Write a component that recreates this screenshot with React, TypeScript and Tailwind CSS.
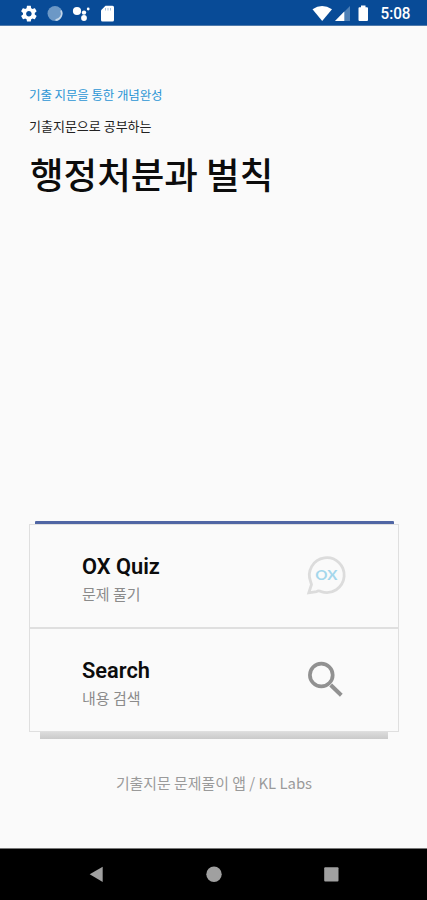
import type { ReactNode } from "react";

const StatusBar = () => (
  <div className="h-[26px] shrink-0 bg-[#084b97] border-b border-[#4f7aab] text-white">
    <svg width="427" height="25" viewBox="0 0 427 25" fill="currentColor">
      {/* settings */}
      <g transform="translate(19.4 4.2) scale(0.79)">
        <path d="M19.43 12.98c.04-.32.07-.64.07-.98s-.03-.66-.07-.98l2.11-1.65c.19-.15.24-.42.12-.64l-2-3.46c-.12-.22-.39-.3-.61-.22l-2.49 1c-.52-.4-1.08-.73-1.69-.98l-.38-2.65C14.46 2.18 14.25 2 14 2h-4c-.25 0-.46.18-.49.42l-.38 2.65c-.61.25-1.17.59-1.69.98l-2.49-1c-.23-.09-.49 0-.61.22l-2 3.46c-.13.22-.07.49.12.64l2.11 1.65c-.04.32-.07.65-.07.98s.03.66.07.98l-2.11 1.65c-.19.15-.24.42-.12.64l2 3.46c.12.22.39.3.61.22l2.49-1c.52.4 1.08.73 1.69.98l.38 2.65c.03.24.24.42.49.42h4c.25 0 .46-.18.49-.42l.38-2.65c.61-.25 1.17-.59 1.69-.98l2.49 1c.23.09.49 0 .61-.22l2-3.46c.12-.22.07-.49-.12-.64l-2.11-1.65zM12 15.5c-1.93 0-3.5-1.57-3.5-3.5s1.57-3.5 3.500-3.500 3.500 1.570 3.500 3.500-1.570 3.500-3.500 3.500z" />
      </g>
      {/* sync spinner */}
      <circle cx="55" cy="13.5" r="7.5" fill="#6c98c6" />
      <path d="M61 10.5A6.7 6.7 0 0 1 55.5 20.1" fill="none" stroke="#c3d6e9" strokeWidth="1.6" />
      {/* assistant */}
      <circle cx="77" cy="11" r="4.1" />
      <circle cx="84" cy="12.6" r="2.2" />
      <circle cx="88.2" cy="9" r="1.4" />
      <circle cx="84" cy="18" r="2.9" />
      {/* sd card */}
      <path d="M105.5 5.7H112.5Q114 5.7 114 7.2V20Q114 21.5 112.5 21.5H102.5Q101 21.5 101 20V10.2Z" />
      <path d="M105.5 8v2.5M108 8v2.5M110.5 8v2.5" stroke="#9dbbd9" strokeWidth="0.9" />
      {/* wifi, signal, battery */}
      <path d="M312.5 9.2Q322 3 332 9.2L322.2 21Z" />
      <path d="M350 6V21H335Z" fill="#4d7fb5" />
      <path d="M344.3 11.5V21H335Z" />
      <path d="M361 5.5h4.5v1.8h1.5q1 0 1 1V20q0 1-1 1h-7.5q-1 0-1-1V8.3q0-1 1-1H361Z" />
      <text x="380.5" y="19.3" fontSize="16" fontWeight="500" fontFamily="Roboto, sans-serif" textLength="30" lengthAdjust="spacingAndGlyphs">
        5:08
      </text>
    </svg>
  </div>
);

const QuizIcon = () => (
  <svg width="44" height="44" viewBox="0 0 44 44" fill="none">
    <path
      d="M6.6 27.5A17.4 17.4 0 1 1 17.2 37.6Q14.5 36.2 12.5 37.6L4.8 38.8L7.5 30.5Z"
      stroke="#dcdcdc"
      strokeWidth="2.8"
    />
    <text x="11.3" y="26" fill="#a5d7ec" fontSize="14" fontWeight="700" fontFamily="Lato, sans-serif" textLength="22" lengthAdjust="spacingAndGlyphs">
      OX
    </text>
  </svg>
);

const SearchIcon = () => (
  <svg width="44" height="44" viewBox="0 0 44 44" fill="none" stroke="#919191">
    <circle cx="17.3" cy="17" r="11.4" strokeWidth="3.7" />
    <path d="M26.7 27L37.3 37.2" strokeWidth="4" />
  </svg>
);

type MenuItemProps = {
  title: string;
  subtitle: string;
  icon: ReactNode;
};

const MenuItem = ({ title, subtitle, icon }: MenuItemProps) => (
  <button className="flex h-full w-full items-center justify-between pl-[52px] pr-[50px] text-left">
    <div className="pt-[5px]">
      <div className="font-[Roboto] text-[21.8px] leading-[28px] font-semibold text-[#0c0c0c]">{title}</div>
      <div className="mt-[2px] text-[15px] leading-[22px] text-[#8b8b8b]">{subtitle}</div>
    </div>
    {icon}
  </button>
);

const NavBar = () => (
  <div className="h-[52px] shrink-0 border-t border-[#777] bg-black">
    <svg width="427" height="51" viewBox="0 0 427 51" fill="#a0a0a0">
      <path d="M89.7 25.3L102.7 17.8V33Z" />
      <circle cx="214" cy="25.3" r="7.7" />
      <rect x="324.2" y="18.3" width="14.3" height="14.3" rx="1" />
    </svg>
  </div>
);

const App = () => {
  return (
    <div className="flex h-[900px] w-[427px] flex-col overflow-hidden bg-[#fafafa] font-['Noto_Sans_CJK_KR',sans-serif]">
      <StatusBar />

      <header className="h-[495px] shrink-0 pl-[29px] pt-[59px] whitespace-nowrap">
        <p className="text-[12.5px] leading-[20px] tracking-[-0.1px] text-[#2c96d5]">기출 지문을 통한 개념완성</p>
        <p className="mt-[11px] text-[13px] leading-[20px] text-[#222]">기출지문으로 공부하는</p>
        <h1 className="mt-[12px] pl-px text-[36.5px] leading-[52px] font-medium text-[#0c0c0c]">행정처분과 벌칙</h1>
      </header>

      <main className="pl-[29px] pr-[28px]">
        <div className="ml-[6px] mr-[5px] h-[3px] rounded-t-[1px] bg-[#5066a4]" />
        <div className="h-[208px] border border-[#dfdfdf]">
          <div className="h-[104px] border-b-2 border-[#dfdfdf]">
            <MenuItem title="OX Quiz" subtitle="문제 풀기" icon={<QuizIcon />} />
          </div>
          <div className="h-[102px]">
            <MenuItem title="Search" subtitle="내용 검색" icon={<SearchIcon />} />
          </div>
        </div>
        <div className="mx-[11px] h-[7px] bg-linear-to-b from-[#dcdcdc] to-[#cacaca]" />
      </main>

      <footer className="flex-1 pt-[33px] pl-px text-center text-[14.9px] leading-[22px] text-[#9a9a9a]">
        기출지문 문제풀이 앱 / KL Labs
      </footer>

      <NavBar />
    </div>
  );
};

export default App;
